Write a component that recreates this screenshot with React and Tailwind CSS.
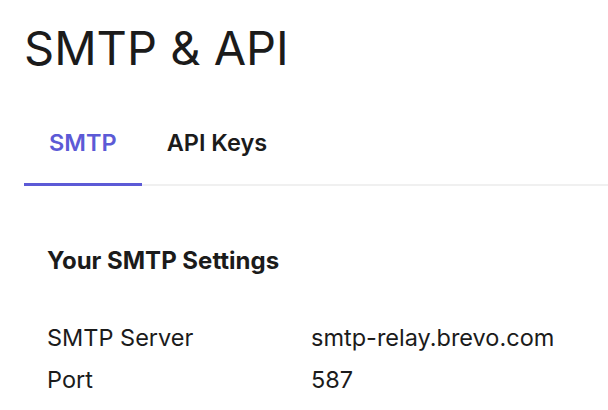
import React from 'react';

const rows = [
    { label: 'SMTP Server', value: 'smtp-relay.brevo.com' },
    { label: 'Port', value: '587' },
];

export default function App() {
    return (
        <div className="h-[410px] w-[608px] overflow-hidden bg-white pl-6 text-[#1b1b1b]" style={{ fontFamily: 'Inter, "Noto Sans", sans-serif' }}>
            {/* --- Header --- */}
            <h1 className="pt-[18px] text-[47px] font-normal leading-[60px]">SMTP &amp; API</h1>

            {/* --- Tabs --- */}
            <div className="mt-[44px] flex border-b-2 border-[#f0f0f0]">
                <button className="-mb-[2px] border-b-[3px] border-[#5c5ad6] px-[25px] pb-[25px] pt-[6px] text-[23.5px] font-semibold leading-[30px] text-[#5c5ad6]">
                    SMTP
                </button>
                <button className="-mb-[2px] border-b-[3px] border-transparent px-[25px] pb-[25px] pt-[6px] text-[23.5px] font-semibold leading-[30px] text-[#1b1b1b]">
                    API Keys
                </button>
            </div>

            {/* --- Settings --- */}
            <div className="pl-[23px] pt-[59px]">
                <h2 className="text-[24px] font-bold leading-[32px]">Your SMTP Settings</h2>
                <div className="mt-[46px] flex flex-col gap-[12px]">
                    {rows.map((row) => (
                        <div key={row.label} className="flex text-[23.5px] leading-[30px]">
                            <span className="w-[264px] shrink-0">{row.label}</span>
                            <span>{row.value}</span>
                        </div>
                    ))}
                </div>
            </div>
        </div>
    );
}
